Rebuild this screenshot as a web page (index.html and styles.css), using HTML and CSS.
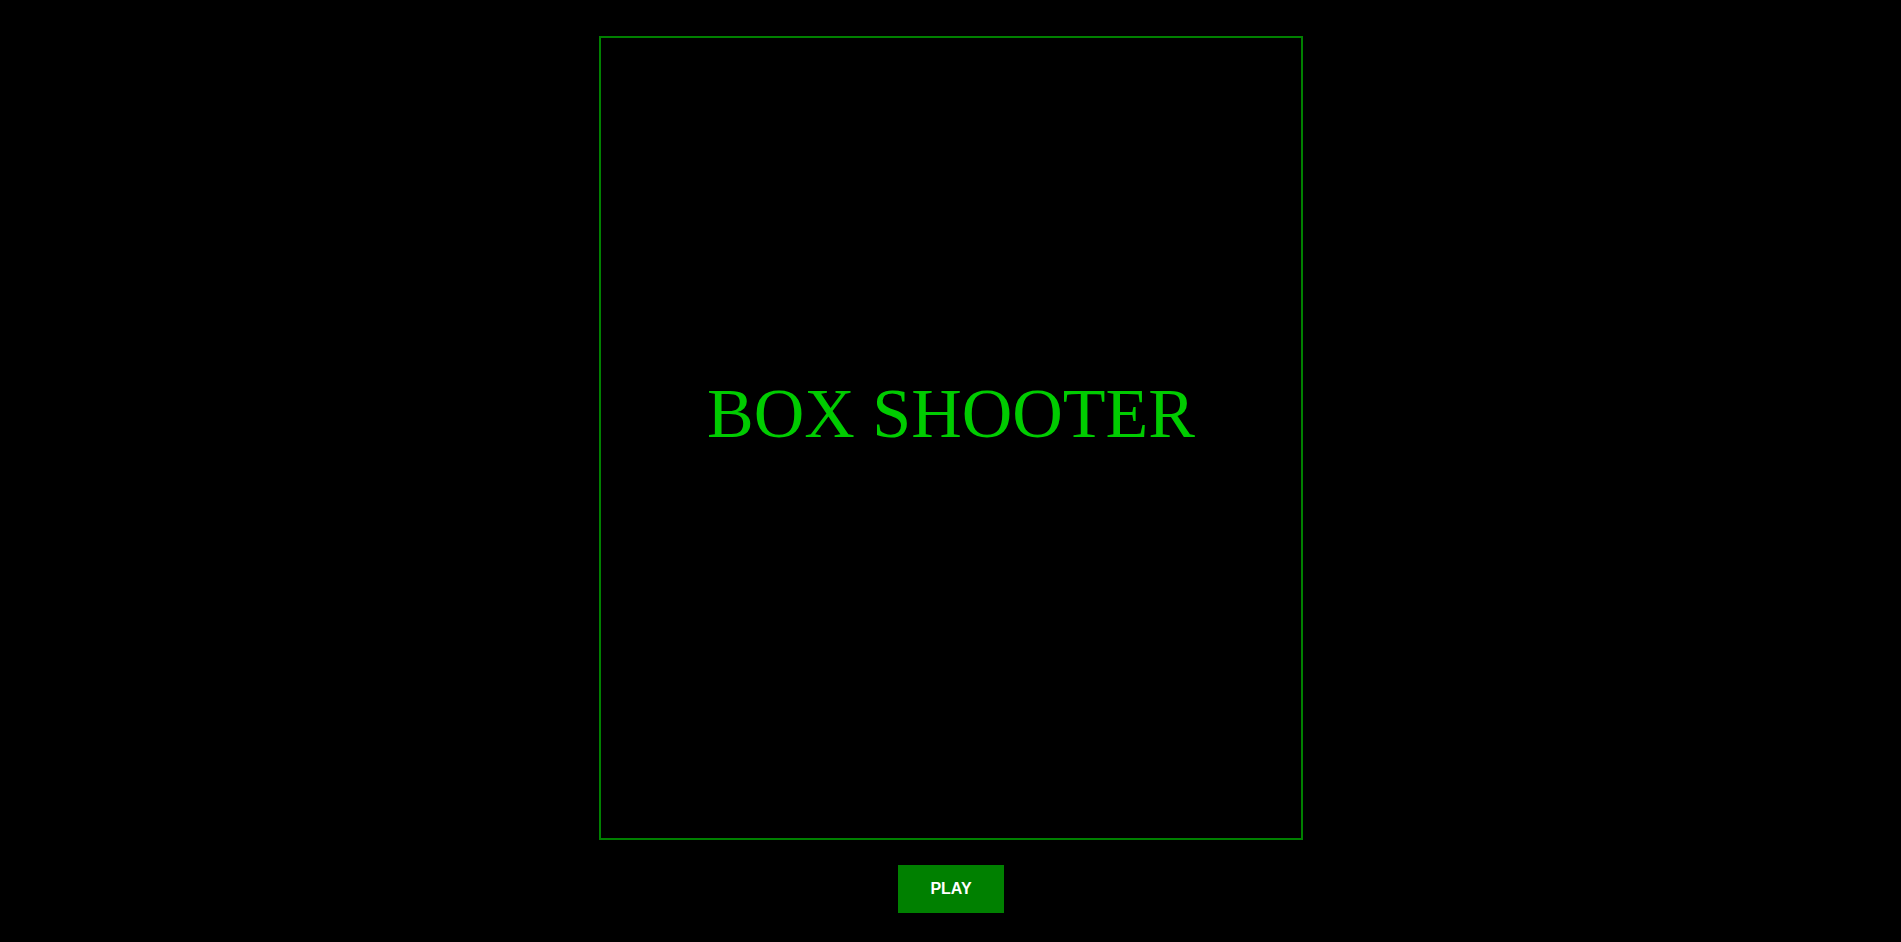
FILE: index.html
```html
<!DOCTYPE html>
<html>
<head>
<meta charset="utf-8">
<title>Box Shooter</title>
<link rel="stylesheet" href="styles.css">
</head>
<body>
<main class="page">
  <div class="board">
    <div class="title">BOX SHOOTER</div>
  </div>
  <button class="play">PLAY</button>
</main>
</body>
</html>
```
FILE: styles.css
```css
html, body {
  margin: 0;
  padding: 0;
  background: #000;
}
.page {
  display: flex;
  flex-direction: column;
  align-items: center;
  padding-top: 36px;
  gap: 25px;
}
.board {
  width: 700px;
  height: 800px;
  border: 2px solid #008000;
  box-sizing: content-box;
  margin-left: 1px;
}
.title {
  padding-top: 341px;
  text-align: center;
  font-family: "Liberation Serif", "Times New Roman", serif;
  font-size: 70px;
  line-height: 70px;
  color: #00cc00;
}
.play {
  width: 106px;
  height: 48px;
  border: none;
  background: #008000;
  color: #fff;
  font-family: "Liberation Sans", Arial, sans-serif;
  font-weight: bold;
  font-size: 16px;
  padding: 0;
  margin-left: 1px;
}
```
